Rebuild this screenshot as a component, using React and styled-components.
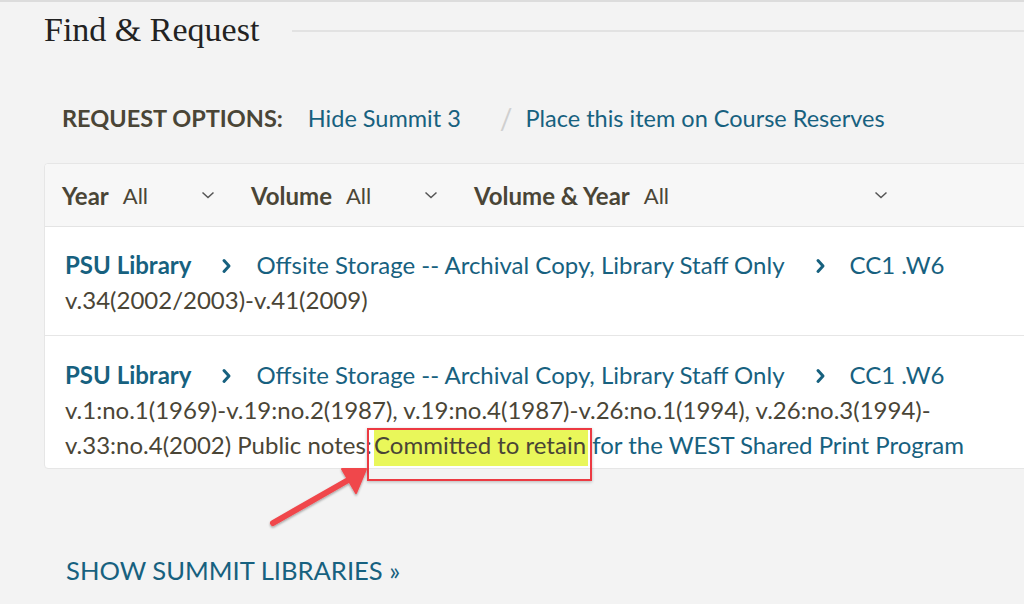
import styled, { createGlobalStyle } from "styled-components";

const GlobalStyle = createGlobalStyle`
  html, body {
    margin: 0;
    padding: 0;
    background: #f3f3f3;
    overflow: hidden;
  }
  body {
    font-family: Lato, "Open Sans", sans-serif;
    color: #4a4536;
  }
`;

const LINK = "#17617f";

const Page = styled.div`
  position: relative;
  width: 1024px;
  height: 604px;
  box-sizing: border-box;
  border-top: 2px solid #dcdcdc;
  padding-left: 44px;
`;

const HeadingRow = styled.div`
  display: flex;
  align-items: center;
  height: 56px;
`;

const Heading = styled.h2`
  margin: 0;
  font-family: "Liberation Serif", serif;
  font-weight: normal;
  font-size: 34px;
  color: #222;
`;

const Rule = styled.div`
  flex: 1;
  margin-left: 33px;
  margin-top: 2px;
  border-top: 2px solid #e2e2e2;
`;

const Options = styled.div`
  display: flex;
  align-items: center;
  height: 40px;
  margin-top: 40px;
  padding-left: 18px;
  font-size: 23.5px;
`;

const OptionsLabel = styled.span`
  font-weight: bold;
  color: #4a4536;
  margin-right: 25px;
`;

const Link = styled.a`
  color: ${LINK};
  text-decoration: none;
`;

const Slash = styled.span`
  color: #cfcfcf;
  font-size: 28px;
  margin: 0 13px 0 39px;
`;

const Panel = styled.div`
  margin-top: 25px;
  margin-right: -10px;
  background: #fff;
  border: 1px solid #e6e6e6;
  border-radius: 4px;
`;

const FilterBar = styled.div`
  display: flex;
  align-items: center;
  height: 62px;
  padding-left: 17px;
  background: #f7f7f7;
  border-bottom: 1px solid #e4e4e4;
  border-radius: 4px 4px 0 0;
`;

const Filter = styled.div`
  display: flex;
  align-items: center;
  width: ${(p) => p.$w}px;
  margin-right: ${(p) => p.$gap}px;
`;

const FilterLabel = styled.span`
  font-weight: bold;
  font-size: 24px;
  margin-right: 14px;
`;

const FilterValue = styled.span`
  flex: 1;
  font-size: 22px;
`;

const Chevron = styled.svg`
  width: 14px;
  height: 10px;
  flex: none;
`;

const Holding = styled.div`
  padding: ${(p) => p.$pad};
  font-size: 24px;
  line-height: 35px;
  border-bottom: ${(p) => (p.$last ? "none" : "1px solid #e6e6e6")};
`;

const Library = styled.span`
  color: ${LINK};
  font-weight: bold;
`;

const Sep = styled.svg`
  width: 9px;
  height: 14px;
  margin: 0 25px 4px 31px;
  vertical-align: middle;
  overflow: visible;
`;

const Highlight = styled.span`
  position: relative;
  margin-left: -4px;
  margin-right: -2px;
  background: #e9f75a;
  padding: 0 2px 7px 0;
  &::after {
    content: "";
    position: absolute;
    left: -7px;
    right: -4px;
    top: -2px;
    bottom: -15px;
    border: 2px solid #ec3a42;
    box-shadow: 0 1px 3px rgba(0, 0, 0, 0.25);
  }
`;

const ShowMore = styled.a`
  display: block;
  margin: 86px 0 0 22px;
  font-size: 25.6px;
  color: ${LINK};
  text-decoration: none;
  text-transform: uppercase;
`;

const Arrow = styled.svg`
  position: absolute;
  left: 262px;
  top: 458px;
  width: 112px;
  height: 72px;
  overflow: visible;
`;

const ChevronIcon = () => (
  <Chevron viewBox="0 0 14 10">
    <path d="M1.5 2.5 L7 7.5 L12.5 2.5" fill="none" stroke="#555" strokeWidth="1.5" />
  </Chevron>
);

const SepIcon = () => (
  <Sep viewBox="0 0 9 14">
    <path d="M2 1.5 L7 7 L2 12.5" fill="none" stroke={LINK} strokeWidth="3" strokeLinecap="round" strokeLinejoin="round" />
  </Sep>
);

const filters = [
  { label: "Year", w: 153, gap: 36 },
  { label: "Volume", w: 187, gap: 36 },
  { label: "Volume & Year", w: 414, gap: 0 },
];

const Location = () => (
  <>
    <Library>PSU Library</Library>
    <SepIcon />
    <Link href="#">Offsite Storage -- Archival Copy, Library Staff Only</Link>
    <SepIcon />
    <Link href="#">CC1 .W6</Link>
  </>
);

export default function App() {
  return (
    <>
      <GlobalStyle />
      <Page>
        <HeadingRow>
          <Heading>Find &amp; Request</Heading>
          <Rule />
        </HeadingRow>

        <Options>
          <OptionsLabel>REQUEST OPTIONS:</OptionsLabel>
          <Link href="#">Hide Summit 3</Link>
          <Slash>/</Slash>
          <Link href="#">Place this item on Course Reserves</Link>
        </Options>

        <Panel>
          <FilterBar>
            {filters.map((f) => (
              <Filter key={f.label} $w={f.w} $gap={f.gap}>
                <FilterLabel>{f.label}</FilterLabel>
                <FilterValue>All</FilterValue>
                <ChevronIcon />
              </Filter>
            ))}
          </FilterBar>

          <Holding $pad="20px 20px 18px 20px">
            <Location />
            <br />
            v.34(2002/2003)-v.41(2009)
          </Holding>

          <Holding $pad="21px 20px 6px 20px" $last>
            <Location />
            <br />
            v.1:no.1(1969)-v.19:no.2(1987), v.19:no.4(1987)-v.26:no.1(1994), v.26:no.3(1994)-
            <br />
            v.33:no.4(2002) Public notes: <Highlight>Committed to retain</Highlight>{" "}
            <Link href="#">for the WEST Shared Print Program</Link>
          </Holding>
        </Panel>

        <ShowMore href="#">Show Summit Libraries »</ShowMore>

        <Arrow viewBox="0 0 112 72">
          <defs>
            <filter id="arrowShadow" x="-20%" y="-20%" width="140%" height="140%">
              <feDropShadow dx="0" dy="1.5" stdDeviation="1.2" floodOpacity="0.35" />
            </filter>
          </defs>
          <g filter="url(#arrowShadow)" fill="#f0474c" stroke="#f0474c">
            <line x1="11" y1="63" x2="88" y2="19" strokeWidth="6" strokeLinecap="round" />
            <polygon points="104,9 80,9 94,33" strokeWidth="2" strokeLinejoin="round" />
          </g>
        </Arrow>
      </Page>
    </>
  );
}
